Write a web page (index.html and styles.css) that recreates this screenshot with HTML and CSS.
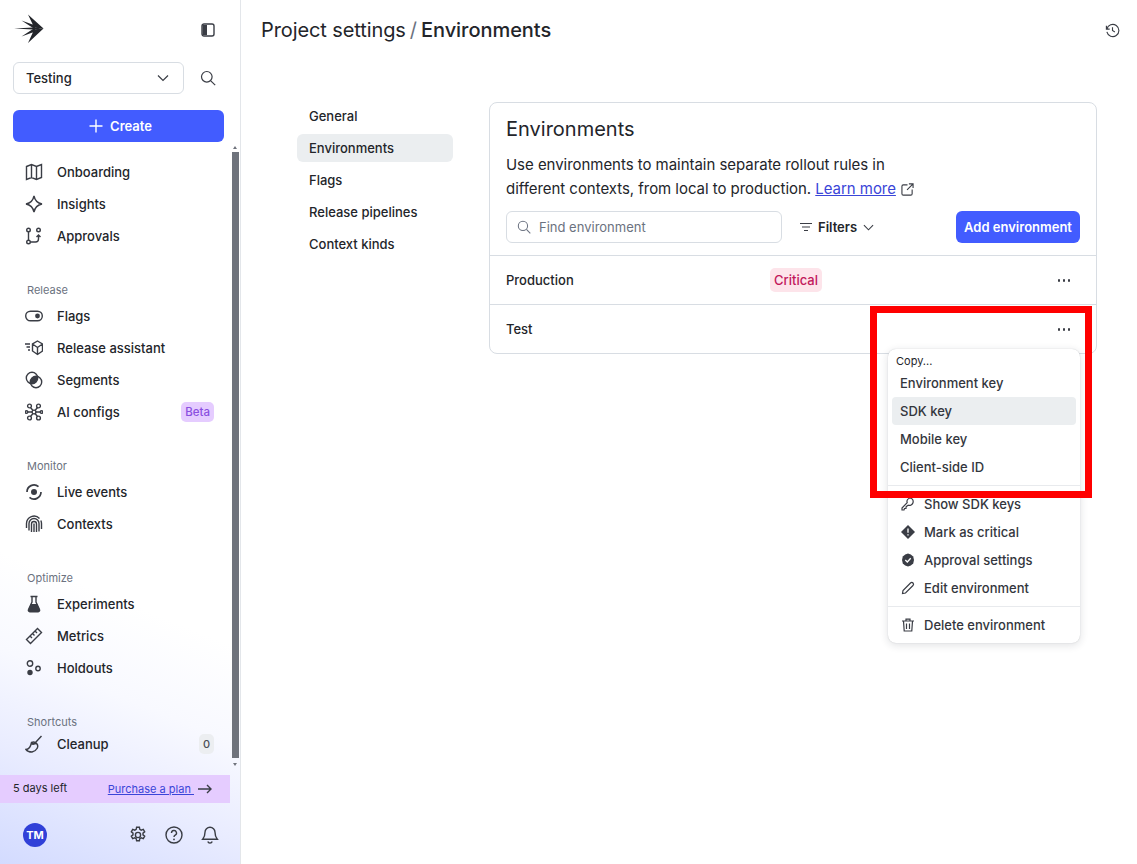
FILE: index.html
```html
<!DOCTYPE html>
<html lang="en">
<head>
<meta charset="utf-8">
<title>Environments</title>
<link rel="stylesheet" href="styles.css">
</head>
<body>
<div class="app">
  <aside class="sidebar">
    <div class="brand-row">
      <svg class="logo" viewBox="0 0 30 30" width="30" height="30"><path d="M0 14.5 L19 13.6 L29.5 14.5 L19 15.4Z" fill="#23252a"/><path d="M14 0.5 L29.5 14.5 L21 15.2Z M7.500 6.500 L29.5 14.5 L21 15.2Z M7.500 22.500 L29.5 14.5 L21 13.8Z M14 29 L29.5 14.5 L21 13.8Z" fill="#23252a"/></svg>
      <svg class="collapse" viewBox="0 0 14 14" width="14" height="14"><rect x="1" y="1" width="12" height="12" rx="2" fill="none" stroke="#3a3d45" stroke-width="1.4"/><path d="M1.5 2h4.5v10H1.5z" fill="#3a3d45"/></svg>
    </div>
    <div class="project-row">
      <div class="project-select"><span>Testing</span>
        <svg viewBox="0 0 12 12" width="12" height="12"><path d="M1 3.5 6 8.5 11 3.5" class="ln"/></svg>
      </div>
      <svg class="search-ic" viewBox="0 0 16 16" width="16" height="16"><circle cx="6.8" cy="6.8" r="5.3" class="ln"/><path d="m10.8 10.8 4.4 4.4" class="ln"/></svg>
    </div>
    <button class="create"><svg viewBox="0 0 14 14" width="14" height="14"><path d="M7 0.5v13M0.5 7h13" fill="none" stroke="#fff" stroke-width="1.4"/></svg>Create</button>
    <nav class="nav">
      <div class="group">
        <a class="item"><svg viewBox="0 0 18 18"><path d="M1.5 3.5 6.5 1.5l5 2 5-2v13l-5 2-5-2-5 2zM6.5 1.5v13M11.5 3.5v13" class="ln"/></svg>Onboarding</a>
        <a class="item"><svg viewBox="0 0 18 18"><path d="M9 1c1 5 3 7 8 8-5 1-7 3-8 8-1-5-3-7-8-8 5-1 7-3 8-8z" class="ln"/></svg>Insights</a>
        <a class="item"><svg viewBox="0 0 18 18"><circle cx="3.5" cy="3" r="1.8" class="ln"/><circle cx="3.5" cy="15" r="1.8" class="ln"/><circle cx="13.5" cy="3" r="1.8" class="ln"/><path d="M3.5 5v8M5.5 15h5c2 0 3-1 3-3V8M11.5 10l2-2 2 2" class="ln"/></svg>Approvals</a>
      </div>
      <div class="group">
        <div class="label">Release</div>
        <a class="item"><svg viewBox="0 0 18 18"><rect x="0.7" y="4.2" width="16.6" height="9.6" rx="4.8" class="ln"/><circle cx="12.5" cy="9" r="2.4" fill="#3a3d45"/></svg>Flags</a>
        <a class="item"><svg viewBox="0 0 18 18"><path d="M0 5h5M1.5 8h3.5M3 11h2" class="ln"/><path d="M12.5 2 17.5 5v7l-5 3.5-5-3.5V5zM7.5 5l5 3.5 5-3.5M12.5 8.500v7" class="ln"/></svg>Release assistant</a>
        <a class="item"><svg viewBox="0 0 18 18"><circle cx="7" cy="7" r="5.7" class="ln"/><circle cx="11" cy="11" r="5.7" class="ln"/><path d="M12.500 5.500A5.700 5.700 0 0 1 5.500 12.500 5.700 5.700 0 0 1 12.500 5.500z" fill="#3a3d45"/></svg>Segments</a>
        <a class="item ai"><svg viewBox="0 0 18 18"><circle cx="9" cy="9" r="1.900" class="ln"/><circle cx="4.500" cy="3" r="1.900" class="ln"/><circle cx="13.500" cy="3" r="1.900" class="ln"/><circle cx="4.500" cy="15" r="1.900" class="ln"/><circle cx="13.500" cy="15" r="1.900" class="ln"/><circle cx="1.500" cy="9" r="1.300" class="ln"/><circle cx="16.500" cy="9" r="1.300" class="ln"/><path d="M5.500 4.500 8 7.500M12.500 4.500 10 7.500M5.500 13.500 8 10.500M12.500 13.500 10 10.500M3 9h4M11 9h4" class="ln"/></svg>AI configs<span class="beta">Beta</span></a>
      </div>
      <div class="group">
        <div class="label">Monitor</div>
        <a class="item"><svg viewBox="0 0 18 18"><circle cx="9" cy="9" r="3" fill="#3a3d45"/><path d="M2 9a7 7 0 0 1 11.500-5.400M16 9a7 7 0 0 1-11.500 5.400" fill="none" stroke="#3a3d45" stroke-width="1.700"/></svg>Live events</a>
        <a class="item"><svg viewBox="0 0 18 18"><path d="M1.500 13V8.500a7.500 7.500 0 0 1 13-5M16.500 14V8.500a7 7 0 0 0-.7-3M4 15.500V8.500a5 5 0 0 1 10 0v8M6.500 17V9a2.500 2.500 0 0 1 5 0v8M9 8.500V17" class="ln"/></svg>Contexts</a>
      </div>
      <div class="group">
        <div class="label">Optimize</div>
        <a class="item"><svg viewBox="0 0 18 18"><path d="M5.500 1.500h7M7 1.500v5.500L3.500 14.500a1.500 1.500 0 0 0 1.300 2.200h8.400a1.500 1.500 0 0 0 1.300-2.200L11 7V1.500" class="ln"/><path d="M5.700 9h6.600l2.500 6.600-.8 1H4l-.8-1z" fill="#3a3d45"/></svg>Experiments</a>
        <a class="item"><svg viewBox="0 0 18 18"><path d="M1.500 12.500 12.500 1.500l4 4-11 11zM5 9l2 2M7.500 6.500l2 2M10 4l2 2" class="ln"/></svg>Metrics</a>
        <a class="item"><svg viewBox="0 0 18 18"><circle cx="5" cy="4.500" r="2.700" class="ln"/><circle cx="13" cy="9.500" r="2.200" class="ln"/><circle cx="5" cy="13.500" r="2.700" fill="#3a3d45"/></svg>Holdouts</a>
      </div>
      <div class="group last">
        <div class="label">Shortcuts</div>
        <a class="item"><svg viewBox="0 0 18 18"><path d="M16.500 1 10.500 7.500M6.500 7.500c2-1 4-.5 5.500 1.500 1 1.500 1 3 0 4.500-1 2-3 3-5 3.500C4 17 2 16 1 14.500c2.500 0 4.500-2 5.500-7z" class="ln"/><path d="M6 9.500c2 .8 4 .2 6-.5L11 8 6.500 7.500z" fill="#3a3d45"/></svg>Cleanup<span class="count">0</span></a>
      </div>
    </nav>
    <div class="scrollbar" aria-hidden="true"></div>
    <div class="trial"><span>5 days left</span><a class="purchase"><span>Purchase a plan&nbsp;</span><svg viewBox="0 0 14 10" width="14" height="10"><path d="M0 5h13M9 1l4 4-4 4" fill="none" stroke="#3a3d45" stroke-width="1.400"/></svg></a></div>
    <div class="foot">
      <span class="avatar">TM</span>
      <div class="foot-icons">
        <svg viewBox="0 0 18 18"><circle cx="9" cy="9" r="2.600" class="ln"/><path d="M7.600 1.200h2.800l.4 2.200 1.400.8 2.100-.8 1.400 2.400-1.700 1.400v1.600l1.700 1.400-1.400 2.400-2.100-.8-1.400.8-.4 2.200H7.600l-.4-2.200-1.400-.8-2.100.8-1.400-2.400 1.700-1.400V7.200L2.300 5.800l1.400-2.400 2.100.8 1.400-.8z" class="ln"/></svg>
        <svg viewBox="0 0 18 18"><circle cx="9" cy="9" r="8" class="ln"/><path d="M6.500 7a2.500 2.500 0 1 1 3.700 2.200C9.400 9.700 9 10.100 9 11" class="ln"/><circle cx="9" cy="13.400" r=".9" fill="#3a3d45"/></svg>
        <svg viewBox="0 0 18 18"><path d="M9 1.200a5 5 0 0 0-5 5c0 4-1 5.500-2.300 7h14.600C15 11.700 14 10.200 14 6.200a5 5 0 0 0-5-5zM6.800 15.500a2.300 2.300 0 0 0 4.400 0" class="ln"/></svg>
      </div>
    </div>
  </aside>
  <main class="main">
    <header class="top">
      <h1><span class="crumb">Project settings</span><span class="sep">/</span><span>Environments</span></h1>
      <svg class="history" viewBox="0 0 16 16" width="15" height="15"><path d="M1.500 3v3.500H5M2 6.500A6.500 6.500 0 1 1 2 9.500M8 4.500V8l2.500 1.500" class="ln"/></svg>
    </header>
    <div class="content">
      <nav class="tabs">
        <a class="tab">General</a>
        <a class="tab on">Environments</a>
        <a class="tab">Flags</a>
        <a class="tab">Release pipelines</a>
        <a class="tab">Context kinds</a>
      </nav>
      <section class="card">
        <div class="card-head">
          <h2>Environments</h2>
          <p>Use environments to maintain separate rollout rules in<br>different contexts, from local to production. <a class="learn">Learn more</a> <svg viewBox="0 0 14 14" width="13" height="13"><path d="M7 2H2.500A1.500 1.500 0 0 0 1 3.500v8A1.500 1.500 0 0 0 2.500 13h8a1.500 1.500 0 0 0 1.500-1.500V7M8.500 1H13v4.500M13 1 6.500 7.500" class="ln"/></svg></p>
          <div class="tools">
            <div class="find"><svg viewBox="0 0 16 16" width="14" height="14"><circle cx="6.800" cy="6.800" r="5.300" class="ln gray"/><path d="m10.800 10.800 4.400 4.400" class="ln gray"/></svg><span>Find environment</span></div>
            <div class="filters"><svg viewBox="0 0 12 10" width="12" height="10"><path d="M0 1.500h12M2 5h8M4 8.500h4" class="ln"/></svg><span>Filters</span><svg viewBox="0 0 12 12" width="11" height="11"><path d="M1 3.500 6 8.500 11 3.500" class="ln"/></svg></div>
            <button class="add">Add environment</button>
          </div>
        </div>
        <div class="row"><span class="name">Production</span><span class="critical">Critical</span><span class="dots"><i></i><i></i><i></i></span></div>
        <div class="row"><span class="name">Test</span><span class="dots"><i></i><i></i><i></i></span></div>
      </section>
    </div>
  </main>
</div>
<div class="menu">
  <div class="menu-label">Copy...</div>
  <div class="mi">Environment key</div>
  <div class="mi hl">SDK key</div>
  <div class="mi">Mobile key</div>
  <div class="mi">Client-side ID</div>
  <hr>
  <div class="mi ic"><svg viewBox="0 0 14 14"><path d="M9.500 1a3.500 3.500 0 0 0-3.300 4.700L1 11v2h2l.5-1.500H5V10l1-1 1.300-.8A3.500 3.500 0 1 0 9.500 1z" class="ln"/></svg>Show SDK keys</div>
  <div class="mi ic"><svg viewBox="0 0 14 14"><path d="M7 0 14 7 7 14 0 7z" fill="#3a3d45"/><path d="M7 3.500v4.200M7 9.200v1.300" stroke="#fff" stroke-width="1.300"/></svg>Mark as critical</div>
  <div class="mi ic"><svg viewBox="0 0 14 14"><path d="M7 .5l2.800 1 2.400 2 .8 3.500-.8 3.500-2.400 2-2.800 1-2.800-1-2.400-2L1 7l.8-3.500 2.400-2z" fill="#3a3d45"/><path d="M4.300 7 6.300 9l3.400-3.800" fill="none" stroke="#fff" stroke-width="1.300"/></svg>Approval settings</div>
  <div class="mi ic"><svg viewBox="0 0 14 14"><path d="M1.500 12.500 2 9.500 9.500 2c.8-.8 1.800-.8 2.500 0s.8 1.700 0 2.500L4.500 12z" class="ln"/></svg>Edit environment</div>
  <hr>
  <div class="mi ic"><svg viewBox="0 0 14 14"><path d="M1 3h12M5 3V1.200h4V3M2.500 3l.7 10h7.600l.7-10M5.500 5.500V11M8.500 5.500V11" class="ln"/></svg>Delete environment</div>
</div>
<div class="highlight" aria-hidden="true"></div>
</body>
</html>
```
FILE: styles.css
```css
* { box-sizing: border-box; }
html, body { margin: 0; height: 100%; overflow: hidden; }
body { font-family: Inter, "Liberation Sans", sans-serif; font-size: 13px; color: #23252a; background: #fff; }
.ln { fill: none; stroke: #3a3d45; stroke-width: 1.2; }
.item .ln, .foot .ln { stroke-width: 1.4; }
.ln.gray { stroke: #6b7280; }
.app { display: flex; height: 864px; }

.sidebar { position: relative; width: 241px; flex: none; height: 864px; display: flex; flex-direction: column; border-right: 1px solid #e3e6ea; background: linear-gradient(22deg, #d3dbff 0, #e9ecff 110px, #f8f9ff 200px, #fff 290px); }
.brand-row { flex: none; height: 62px; padding: 14px 25px 0 14px; display: flex; justify-content: space-between; align-items: flex-start; }
.collapse { margin-top: 9px; }
.project-row { flex: none; display: flex; align-items: center; gap: 16px; padding-left: 13px; }
.project-select { width: 171px; height: 32px; border: 1px solid #d8dde3; border-radius: 6px; background: #fff; display: flex; align-items: center; justify-content: space-between; padding: 0 14px 0 12px; font-weight: 500; }
.create { flex: none; margin: 16px 16px 0 13px; height: 32px; border: 0; border-radius: 6px; padding: 0 0 0 4px; background: #425cff; color: #fff; font: 600 13px Inter, sans-serif; display: flex; align-items: center; justify-content: center; gap: 7px; }
.nav { flex: 1; min-height: 0; padding: 14px 0 0 25px; }
.group { margin-bottom: 26px; }
.label { height: 22px; line-height: 24px; font-size: 11px; color: #6b7280; padding-left: 2px; }
.item { height: 32px; display: flex; align-items: center; gap: 14px; font-weight: 500; padding-right: 26px; color: #23252a; }
.group.last .item { height: 24px; }
.item svg { width: 18px; height: 18px; flex: none; }
.beta { margin-left: auto; background: #e5ccff; color: #8a4fe0; font-size: 11.5px; border-radius: 5px; padding: 0 4px; height: 20px; line-height: 20px; font-weight: 500; }
.count { margin-left: auto; background: #eceef1; color: #4b4f57; border-radius: 5px; font-size: 11px; width: 15px; height: 20px; line-height: 20px; text-align: center; }
.scrollbar { position: absolute; left: 232px; top: 152px; width: 7px; height: 606px; background: #6f737c; }
.scrollbar::before, .scrollbar::after { content: ""; position: absolute; left: 1px; border-left: 2.5px solid transparent; border-right: 2.5px solid transparent; }
.scrollbar::before { top: -6px; border-bottom: 3px solid #6f737c; }
.scrollbar::after { bottom: -8px; border-top: 3px solid #6f737c; }
.trial { flex: none; height: 28px; width: 230px; background: #e5ccff; display: flex; align-items: center; justify-content: space-between; padding: 0 18px 0 13px; font-size: 11px; }
.trial > span { margin-top: -3px; }
.purchase { display: flex; align-items: center; color: #3a45d8; gap: 4px; margin-top: -1px; }
.purchase span { text-decoration: underline; }
.foot { flex: none; height: 61px; display: flex; align-items: center; justify-content: space-between; padding: 3px 21px 0 23px; }
.avatar { width: 24px; height: 24px; border-radius: 50%; background: #3040d8; color: #fff; font-size: 11px; font-weight: 700; display: flex; align-items: center; justify-content: center; }
.foot-icons { display: flex; gap: 18px; }
.foot-icons svg { width: 18px; height: 18px; }

.main { flex: 1; min-width: 0; }
.top { height: 60px; display: flex; justify-content: space-between; align-items: center; padding: 0 17px 0 20px; }
h1 { margin: 0; font-size: 20px; line-height: 28px; font-weight: 500; display: flex; gap: 4px; }
h1 .crumb { font-weight: 400; letter-spacing: -0.1px; }
h1 .sep { color: #6b7280; font-weight: 400; }
h1 span:last-child { font-weight: 500; letter-spacing: -0.05px; }
.content { display: flex; gap: 36px; padding: 42px 40px 0 56px; }
.tabs { width: 156px; flex: none; display: flex; flex-direction: column; }
.tab { height: 28px; margin-bottom: 4px; line-height: 28px; padding-left: 12px; font-weight: 500; border-radius: 6px; }
.tab.on { background: #ebeef0; }
.card { width: 608px; height: 252px; border: 1px solid #d8dde3; border-radius: 8px; }
.card-head { padding: 12px 16px; border-bottom: 1px solid #d8dde3; height: 153px; }
h2 { margin: 0; font-size: 20px; line-height: 28px; font-weight: 400; }
.card-head p { margin: 10px 0 0; font-size: 15px; line-height: 24px; letter-spacing: -0.04px; }
.card-head p svg { vertical-align: -2px; margin-left: 1px; }
.learn { color: #3a45d8; text-decoration: underline; }
.tools { display: flex; align-items: center; margin-top: 10px; }
.find { width: 276px; height: 32px; border: 1px solid #d8dde3; border-radius: 6px; display: flex; align-items: center; gap: 8px; padding: 0 10px; color: #6b7280; }
.filters { display: flex; align-items: center; gap: 6px; margin-left: 18px; font-weight: 600; }
.add { margin-left: auto; width: 124px; height: 32px; border: 0; border-radius: 6px; background: #425cff; color: #fff; font: 600 13px Inter, sans-serif; white-space: nowrap; padding: 0; }
.row { height: 49px; padding: 0 16px; display: flex; align-items: center; position: relative; border-bottom: 1px solid #d8dde3; }
.row:last-child { border-bottom: 0; height: 48px; }
.name { font-weight: 500; width: 264px; }
.critical { background: #fde4ea; color: #c2185b; height: 24px; line-height: 24px; padding: 0 4px; border-radius: 5px; font-weight: 500; }
.dots { position: absolute; right: 26px; top: 50%; margin-top: -1px; display: flex; gap: 2.5px; }
.dots i { width: 2.5px; height: 2.5px; border-radius: 50%; background: #3a3d45; }

.menu { position: absolute; left: 888px; top: 349px; width: 192px; height: 294px; background: #fff; border-radius: 8px; box-shadow: 0 0 1px rgba(30,35,50,.25), 0 2px 8px rgba(30,35,50,.14); padding: 4px; font-size: 13px; color: #33363d; font-weight: 500; }
.menu-label { font-size: 11px; height: 16px; line-height: 16px; padding-left: 4px; font-weight: 400; color: #23252a; }
.mi { height: 28px; line-height: 28px; padding-left: 8px; border-radius: 4px; display: flex; align-items: center; }
.mi.hl { background: #ebeef0; }
.mi.ic { gap: 9px; padding-left: 9px; }
.mi svg { width: 14px; height: 14px; flex: none; }
.menu hr { border: 0; border-top: 1px solid #e8eaed; margin: 4px -4px; }
.highlight { position: absolute; left: 870px; top: 306px; width: 222px; height: 192px; border: 7px solid #f00; }
```
